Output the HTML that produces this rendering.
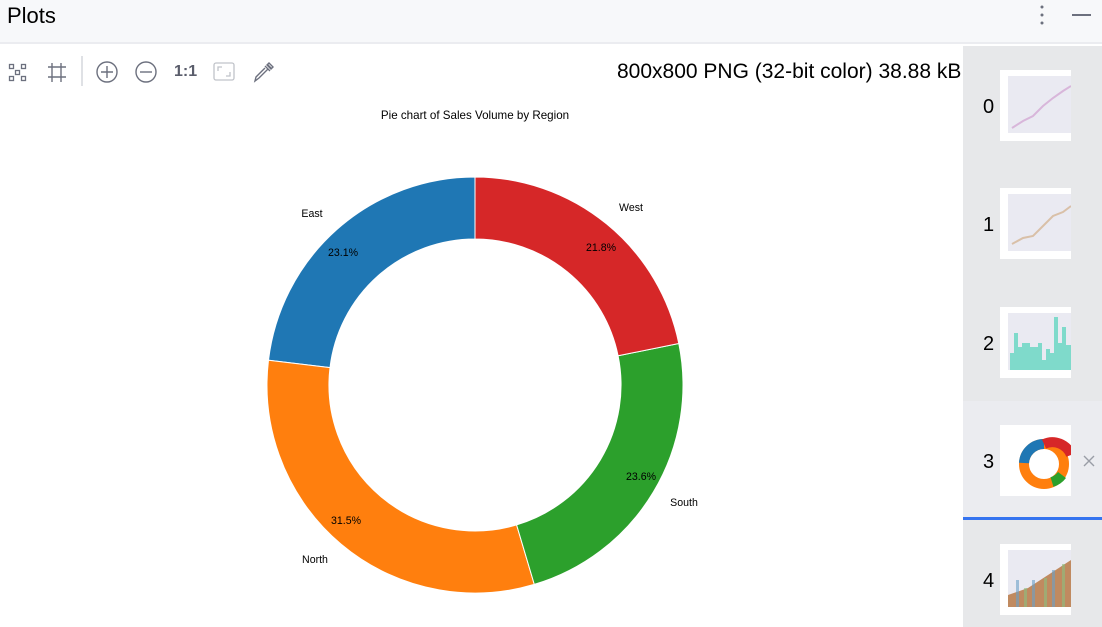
<!DOCTYPE html>
<html><head><meta charset="utf-8"><style>
*{margin:0;padding:0;box-sizing:border-box}
body{width:1102px;height:627px;overflow:hidden;background:#fff;font-family:"Liberation Sans",sans-serif;position:relative}
.hdr{position:absolute;left:0;top:0;width:1102px;height:44px;background:#f7f8fa;border-bottom:2px solid #ebecf0}
.hdr .t{position:absolute;left:7px;top:3px;font-size:22px;color:#000}
.side{position:absolute;left:963px;top:46px;width:139px;height:581px;background:#e7e8ea}
.sel{position:absolute;left:0;top:355px;width:139px;height:116px;background:#ebecf0}
.bar{position:absolute;left:0;top:471px;width:139px;height:3px;background:#3574f0}
.num{position:absolute;left:20px;font-size:20px;color:#000}
.th{position:absolute;left:37px;width:71px;height:71px;background:#fff;overflow:hidden}
.th .p{position:absolute;left:8px;top:6px;right:0;bottom:8px;background:#eaeaf2}
.ico{position:absolute;top:60px}
</style></head><body>
<div class="hdr"><div class="t">Plots</div>
<svg style="position:absolute;left:1038px;top:5px" width="8" height="20"><circle cx="4" cy="2" r="1.5" fill="#6c707e"/><circle cx="4" cy="10" r="1.5" fill="#6c707e"/><circle cx="4" cy="18" r="1.5" fill="#6c707e"/></svg>
<div style="position:absolute;left:1072px;top:14px;width:19px;height:2px;background:#6c707e"></div>
</div>
<svg class="ico" style="left:8px" width="20" height="22" viewBox="0 0 20 22" fill="none" stroke="#6c707e" stroke-width="1.3"><rect x="1.5" y="4.5" width="4" height="4"/><rect x="13.5" y="4.5" width="4" height="4"/><rect x="7.5" y="10.5" width="4" height="4"/><rect x="1.5" y="16.5" width="4" height="4"/><rect x="13.5" y="16.5" width="4" height="4"/></svg>
<svg class="ico" style="left:47px" width="20" height="22" viewBox="0 0 20 22" fill="none" stroke="#6c707e" stroke-width="1.4"><path d="M5 3v19M14 3v19M1 7h18M1 17h18"/></svg>
<div style="position:absolute;left:81px;top:56px;width:2px;height:30px;background:#dfe1e5"></div>
<svg class="ico" style="left:95px" width="24" height="24" viewBox="0 0 24 24" fill="none" stroke="#6c707e" stroke-width="1.4"><circle cx="12" cy="12" r="10"/><path d="M12 6v12M6 12h12"/></svg>
<svg class="ico" style="left:134px" width="24" height="24" viewBox="0 0 24 24" fill="none" stroke="#6c707e" stroke-width="1.4"><circle cx="12" cy="12" r="10"/><path d="M6 12h12"/></svg>
<div style="position:absolute;left:174px;top:63px;font-size:16px;font-weight:bold;color:#5a5d6b">1:1</div>
<svg class="ico" style="left:212px" width="24" height="24" viewBox="0 0 24 24" fill="none" stroke="#c0c3c9" stroke-width="1.3"><rect x="2" y="3" width="20" height="17" rx="2"/><path d="M6 11V7h4M18 12v4h-4"/></svg>
<svg class="ico" style="left:252px" width="24" height="24" viewBox="0 0 24 24" fill="none" stroke="#6c707e" stroke-width="1.4"><path d="M15 4l5 5M13 6l5 5M16 9L7 18l-4 3 1-4 9-9M17 3l4 4-2 2-4-4z"/></svg>
<div style="position:absolute;left:617px;top:60px;font-size:21px;color:#000;white-space:nowrap">800x800 PNG (32-bit color) 38.88 kB</div>
<svg style="position:absolute;left:0;top:0" width="963" height="627">
<text x="475" y="119" font-size="11.6" text-anchor="middle" font-family="Liberation Sans">Pie chart of Sales Volume by Region</text>
<g stroke="#fff" stroke-width="1">
<path d="M475 177A208 208 0 0 0 268.5 360.2L330 367.6A146 146 0 0 1 475 239Z" fill="#1f77b4"/>
<path d="M268.5 360.2A208 208 0 0 0 534.3 584.4L516.6 524.9A146 146 0 0 1 330 367.6Z" fill="#ff7f0e"/>
<path d="M534.3 584.4A208 208 0 0 0 678.8 343.5L618.1 355.8A146 146 0 0 1 516.6 524.9Z" fill="#2ca02c"/>
<path d="M678.8 343.5A208 208 0 0 0 475 177L475 239A146 146 0 0 1 618.1 355.8Z" fill="#d62728"/>
</g>
<g font-size="10.6" font-family="Liberation Sans" fill="#000" text-anchor="middle">
<text x="312" y="217">East</text><text x="631" y="211">West</text><text x="684" y="506">South</text><text x="315" y="563">North</text>
<text x="343" y="256">23.1%</text><text x="601" y="251">21.8%</text><text x="641" y="480">23.6%</text><text x="346" y="524">31.5%</text>
</g>
</svg>
<div class="side">
<div class="sel"></div><div class="bar"></div>
<div class="num" style="top:50px">0</div>
<div class="th" style="top:24px"><div class="p"><svg width="63" height="57"><path d="M4 52L15 45L25 40L35 30L45 22L55 15L63 10" stroke="#d8b6da" stroke-width="2" fill="none"/></svg></div></div>
<div class="num" style="top:168px">1</div>
<div class="th" style="top:142px"><div class="p"><svg width="63" height="57"><path d="M4 50L15 44L25 42L35 32L45 22L55 18L63 12" stroke="#d9c0a8" stroke-width="2" fill="none"/></svg></div></div>
<div class="num" style="top:287px">2</div>
<div class="th" style="top:261px"><div class="p"><svg width="63" height="57"><g fill="#7fdacb"><rect x="2" y="40" width="4" height="17"/><rect x="6" y="20" width="4" height="37"/><rect x="10" y="34" width="4" height="23"/><rect x="14" y="30" width="8" height="27"/><rect x="22" y="34" width="8" height="23"/><rect x="30" y="30" width="4" height="27"/><rect x="34" y="47" width="4" height="10"/><rect x="38" y="36" width="4" height="21"/><rect x="42" y="40" width="4" height="17"/><rect x="46" y="4" width="4" height="53"/><rect x="50" y="30" width="4" height="27"/><rect x="54" y="14" width="4" height="43"/><rect x="58" y="32" width="5" height="25"/></g></svg></div></div>
<div class="num" style="top:405px">3</div>
<div class="th" style="top:379px;background:#fff"><svg width="71" height="71"><circle cx="44" cy="39" r="20" fill="none" stroke="#ff7f0e" stroke-width="10"/><path d="M44 19A20 20 0 0 0 24 38" fill="none" stroke="#1f77b4" stroke-width="10"/><path d="M44 19A20 20 0 0 1 71 30" fill="none" stroke="#d62728" stroke-width="10"/><path d="M62 50A20 20 0 0 1 52 57" fill="none" stroke="#2ca02c" stroke-width="10"/></svg></div>
<svg style="position:absolute;left:120px;top:409px" width="12" height="12" stroke="#9a9da6" stroke-width="1.4"><path d="M1 1L11 11M11 1L1 11"/></svg>
<div class="num" style="top:524px">4</div>
<div class="th" style="top:498px"><div class="p"><svg width="63" height="57"><path d="M0 57L0 45L20 38L40 25L63 10L63 57Z" fill="#c08a60"/><g fill="#6aa0c8" opacity=".6"><rect x="8" y="30" width="3" height="27"/><rect x="24" y="30" width="3" height="27"/><rect x="44" y="20" width="3" height="37"/></g><g fill="#8cc080" opacity=".6"><rect x="16" y="38" width="3" height="19"/><rect x="36" y="28" width="3" height="29"/><rect x="54" y="14" width="3" height="43"/></g></svg></div></div>
</div>
</body></html>
